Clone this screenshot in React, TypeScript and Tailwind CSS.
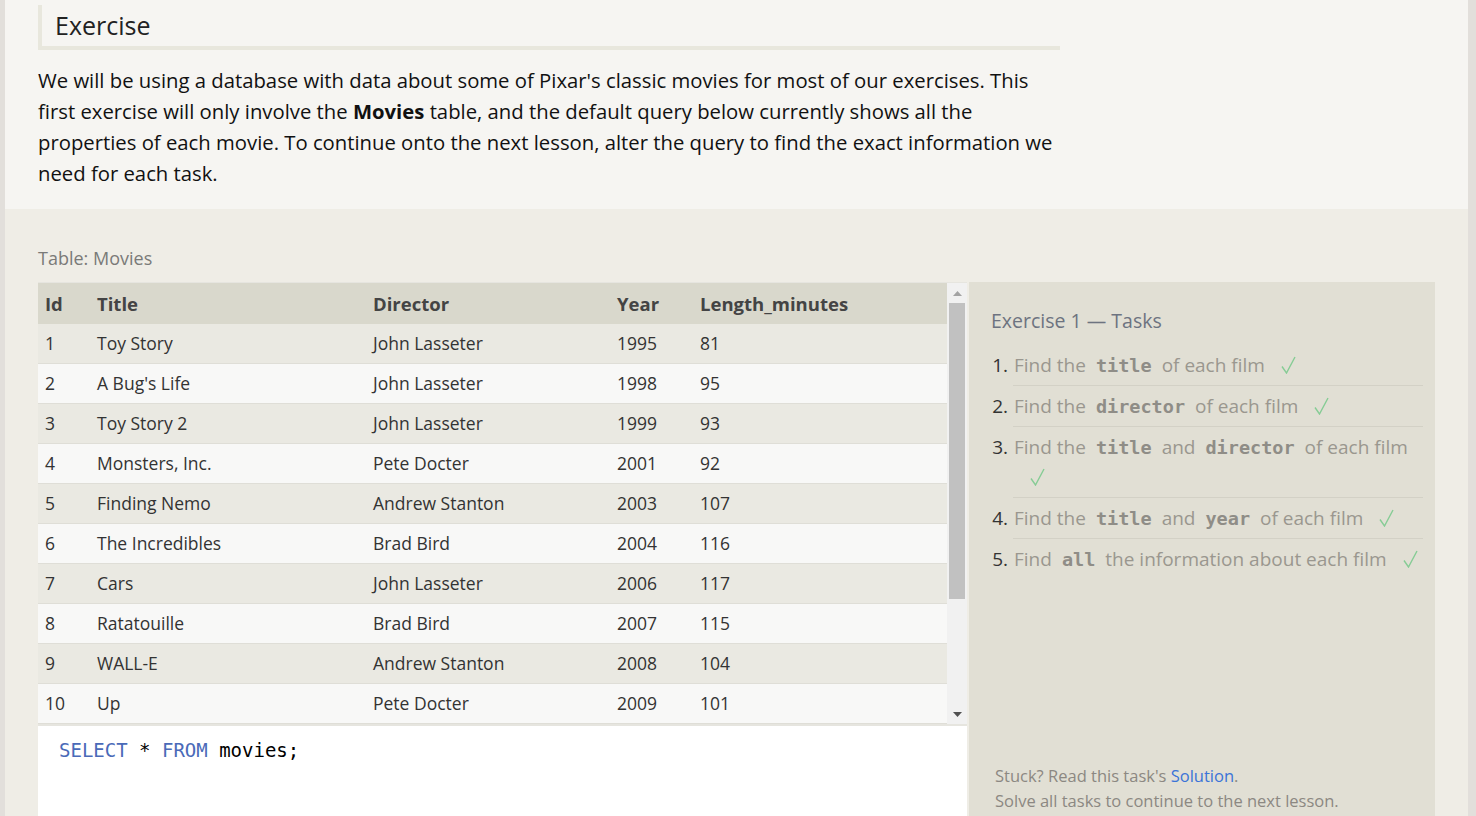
import React from 'react'

const movies = [
    [1, 'Toy Story', 'John Lasseter', 1995, 81],
    [2, "A Bug's Life", 'John Lasseter', 1998, 95],
    [3, 'Toy Story 2', 'John Lasseter', 1999, 93],
    [4, 'Monsters, Inc.', 'Pete Docter', 2001, 92],
    [5, 'Finding Nemo', 'Andrew Stanton', 2003, 107],
    [6, 'The Incredibles', 'Brad Bird', 2004, 116],
    [7, 'Cars', 'John Lasseter', 2006, 117],
    [8, 'Ratatouille', 'Brad Bird', 2007, 115],
    [9, 'WALL-E', 'Andrew Stanton', 2008, 104],
    [10, 'Up', 'Pete Docter', 2009, 101],
]

const sans = "font-['Open_Sans','Noto_Sans',sans-serif]"
const mono = "font-['DejaVu_Sans_Mono','Liberation_Mono',monospace]"

const Code = ({ children }: { children: React.ReactNode }) => (
    <code className={`${mono} font-bold text-[18.5px] leading-none text-[#8f8d87] px-[10px]`}>{children}</code>
)

const Check = () => (
    <svg className="inline-block ml-[16px] align-[-2px]" width="15" height="18" viewBox="0 0 15 18">
        <path d="M1 10.5L5.5 17L14 1" fill="none" stroke="#86cc95" strokeWidth="1.4" />
    </svg>
)

const tasks: React.ReactNode[] = [
    <>Find the<Code>title</Code>of each film</>,
    <>Find the<Code>director</Code>of each film</>,
    <>Find the<Code>title</Code>and<Code>director</Code>of each film</>,
    <>Find the<Code>title</Code>and<Code>year</Code>of each film</>,
    <>Find<Code>all</Code>the information about each film</>,
]

const cols = 'grid grid-cols-[52px_276px_244px_83px_1fr]'

const App = () => {
    return (
        <div className={`h-[816px] overflow-hidden flex bg-[#e2dfdb] ${sans}`}>
            <div className="w-[5px] shrink-0" />

            <div className="flex-1 flex flex-col">

                <div className="bg-[#f6f5f2] px-[33px] pt-[5px] pb-[20px]">
                    <div className="w-[1022px] h-[45px] border-l-4 border-b-4 border-[#e8e7dd] pl-[13px] flex items-center">
                        <h1 className="text-[25px] text-[#222]">Exercise</h1>
                    </div>
                    <p className="mt-[15px] w-[1022px] text-[20.3px] leading-[31px] text-[#111]">
                        We will be using a database with data about some of Pixar's classic movies for most of our exercises. This first exercise will only involve the <b>Movies</b> table, and the default query below currently shows all the properties of each movie. To continue onto the next lesson, alter the query to find the exact information we need for each task.
                    </p>
                </div>

                <div className="flex-1 bg-[#efede6] px-[33px] pt-[36px]">
                    <div className="text-[18px] text-[#7a7a78] leading-[26px]">Table: Movies</div>

                    <div className="mt-[11px] flex gap-[2px]">

                        <div className="w-[929px] shrink-0 flex flex-col">
                            <div className="h-[442px] flex overflow-hidden border-t border-[#e6e5df]">
                                <div className="flex-1 text-[17.5px]">
                                    <div className={`${cols} h-[41px] items-center bg-[#d9d8cc] font-bold text-[18.5px] text-[#444]`}>
                                        <div className="pl-[7px]">Id</div>
                                        <div className="pl-[7px]">Title</div>
                                        <div className="pl-[7px]">Director</div>
                                        <div className="pl-[7px]">Year</div>
                                        <div className="pl-[7px]">Length_minutes</div>
                                    </div>
                                    {movies.map((m, i) => (
                                        <div
                                            key={i}
                                            className={`${cols} h-[40px] items-center border-b border-[#dfded7] text-[#333] ${i % 2 === 0 ? 'bg-[#eae9e2]' : 'bg-[#f8f8f7]'}`}>
                                            {m.map((v, j) => (
                                                <div key={j} className="pl-[7px]">{v}</div>
                                            ))}
                                        </div>
                                    ))}
                                </div>

                                <div className="w-[20px] shrink-0 bg-[#f1f1f1] flex flex-col items-center">
                                    <div className="h-[20px] flex items-center justify-center">
                                        <svg width="9" height="5" viewBox="0 0 9 5"><path d="M4.5 0L9 5H0z" fill="#a3a3a3" /></svg>
                                    </div>
                                    <div className="w-[16px] h-[296px] bg-[#c1c1c1]" />
                                    <div className="flex-1" />
                                    <div className="h-[20px] flex items-center justify-center">
                                        <svg width="9" height="5" viewBox="0 0 9 5"><path d="M0 0H9L4.5 5z" fill="#505050" /></svg>
                                    </div>
                                </div>
                            </div>

                            <div className="flex-1 h-[120px] bg-white border-t-2 border-[#e6e5df] pl-[21px] pt-[11px]">
                                <div className={`${mono} text-[19px] leading-[26px] text-black`}>
                                    <span className="text-[#4a6ab8]">SELECT</span> * <span className="text-[#4a6ab8]">FROM</span> movies;
                                </div>
                            </div>
                        </div>

                        <div className="w-[466px] shrink-0 h-[560px] bg-[#e1dfd4] flex flex-col">
                            <h2 className="pl-[22px] pt-[26px] text-[19.5px] leading-[26px] text-[#6d7380]">Exercise 1 — Tasks</h2>

                            <ol className="mt-[11px] list-decimal pl-[44px] pr-[12px] text-[19px] leading-[30px] marker:text-[#333]">
                                {tasks.map((t, i) => (
                                    <li key={i} className="py-[5px] pl-[1px] border-b border-[#d3d1c6] last:border-b-0 text-[#9a978f]">
                                        {t}<Check />
                                    </li>
                                ))}
                            </ol>

                            <div className="pl-[26px] mt-[184px] text-[16.5px] leading-[25px] text-[#8c8882]">
                                <div>Stuck? Read this task's <span className="text-[#3b74d8]">Solution</span>.</div>
                                <div>Solve all tasks to continue to the next lesson.</div>
                            </div>
                        </div>

                    </div>
                </div>
            </div>

            <div className="w-[8px] shrink-0" />
        </div>
    )
}

export default App
